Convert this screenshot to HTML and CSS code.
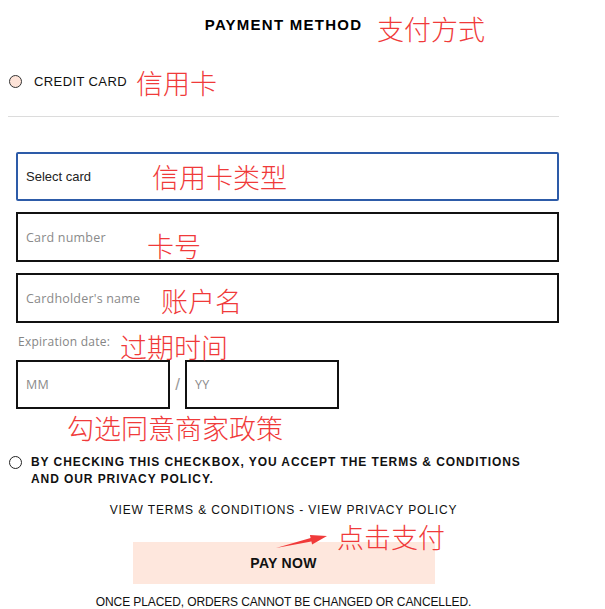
FILE: index.html
```html
<!DOCTYPE html>
<html lang="en">
<head>
<meta charset="utf-8">
<title>Payment method</title>
<link rel="stylesheet" href="styles.css">
</head>
<body>
<div class="page">
  <h1 class="title">PAYMENT METHOD</h1>
  <div class="method">
    <span class="radio radio-filled"></span>
    <span class="method-label">CREDIT CARD</span>
  </div>
  <div class="divider"></div>
  <div class="fields">
    <div class="field field-select">Select card</div>
    <div class="field field-input field-gap">Card number</div>
    <div class="field field-input field-gap">Cardholder's name</div>
    <div class="exp-label">Expiration date:</div>
    <div class="exp-row">
      <div class="field field-input field-short">MM</div>
      <span class="slash">/</span>
      <div class="field field-input field-short">YY</div>
    </div>
  </div>
  <div class="agree">
    <span class="radio radio-empty"></span>
    <p class="agree-text">BY CHECKING THIS CHECKBOX, YOU ACCEPT THE TERMS &amp; CONDITIONS AND OUR PRIVACY POLICY.</p>
  </div>
  <div class="links">VIEW TERMS &amp; CONDITIONS - VIEW PRIVACY POLICY</div>
  <button class="pay" type="button">PAY NOW</button>
  <p class="final-note">ONCE PLACED, ORDERS CANNOT BE CHANGED OR CANCELLED.</p>

  <div class="notes">
    <span class="note note-method">支付方式</span>
    <span class="note note-credit">信用卡</span>
    <span class="note note-type">信用卡类型</span>
    <span class="note note-number">卡号</span>
    <span class="note note-name">账户名</span>
    <span class="note note-exp">过期时间</span>
    <span class="note note-agree">勾选同意商家政策</span>
    <span class="note note-pay">点击支付</span>
    <svg class="arrow" width="62" height="22" viewBox="0 0 62 22" aria-hidden="true">
      <polygon points="6,18 40.6,8 39.9,4.9 57,6 42.1,14.6 41.4,11.5" fill="#f03a3a"/>
    </svg>
  </div>
</div>
</body>
</html>
```

FILE: styles.css
```css
html, body {
  margin: 0;
  padding: 0;
  background: #ffffff;
  overflow: hidden;
}

body {
  font-family: "Liberation Sans", Arial, sans-serif;
  color: #111;
}

.page {
  position: relative;
  width: 551px;
  height: 609px;
  padding: 0 46px 0 8px;
}

.title {
  margin: 0;
  height: 48px;
  display: flex;
  align-items: center;
  justify-content: center;
  font-size: 15px;
  font-weight: bold;
  letter-spacing: 1.25px;
  color: #000;
}

.method {
  height: 66px;
  display: flex;
  align-items: center;
  gap: 12px;
  padding-left: 1px;
}

.radio {
  display: block;
  width: 13px;
  height: 13px;
  box-sizing: border-box;
  border-radius: 50%;
  flex: none;
}

.radio-filled {
  background: #fde3d8;
  border: 1px solid #333;
}

.radio-empty {
  background: #fff;
  border: 1.5px solid #222;
}

.method-label {
  font-size: 13px;
  letter-spacing: 0.4px;
  color: #111;
}

.divider {
  margin-top: 2px;
  height: 1px;
  background: #dcdcdc;
}

.fields {
  margin-left: 8px;
  margin-top: 35px;
}

.field {
  box-sizing: border-box;
  display: flex;
  align-items: center;
  padding-left: 8px;
  height: 50px;
}

.field-select {
  height: 49px;
  border: 2px solid #2d5ba8;
  border-radius: 2px;
  font-size: 13px;
  color: #222;
}

.field-input {
  border: 2px solid #111;
  font-family: "Open Sans", "Liberation Sans", sans-serif;
  font-size: 12.5px;
  letter-spacing: 0.2px;
  color: #8a8a8a;
}

.field-gap {
  margin-top: 11px;
}

.exp-label {
  margin-top: 11px;
  padding-left: 2px;
  height: 16px;
  line-height: 16px;
  font-family: "Open Sans", "Liberation Sans", sans-serif;
  font-size: 12px;
  letter-spacing: 0.25px;
  color: #858585;
}

.exp-row {
  margin-top: 10px;
  display: flex;
  align-items: center;
}

.field-short {
  width: 154px;
  height: 49px;
}

.slash {
  width: 15px;
  text-align: center;
  font-size: 17px;
  color: #9a9a9a;
}

.agree {
  margin-top: 45px;
  display: flex;
  align-items: flex-start;
  gap: 9px;
  padding-left: 1px;
}

.agree .radio {
  margin-top: 2px;
}

.agree-text {
  margin: 0;
  width: 496px;
  font-size: 12px;
  line-height: 17px;
  font-weight: bold;
  letter-spacing: 0.92px;
  color: #111;
}

.links {
  margin-top: 14px;
  height: 16px;
  line-height: 16px;
  text-align: center;
  font-size: 12px;
  letter-spacing: 0.85px;
  color: #111;
}

.pay {
  display: block;
  margin: 24px auto 0;
  width: 302px;
  height: 42px;
  border: none;
  background: #fee7dd;
  font-family: "Liberation Sans", Arial, sans-serif;
  font-size: 14px;
  font-weight: bold;
  letter-spacing: 0.3px;
  color: #111;
  padding: 0;
}

.final-note {
  margin: 11px 0 0;
  height: 14px;
  line-height: 14px;
  text-align: center;
  font-size: 12px;
  letter-spacing: -0.1px;
  color: #111;
}

.notes {
  position: absolute;
  inset: 0;
  pointer-events: none;
}

.note {
  position: absolute;
  font-family: "Noto Sans CJK SC", sans-serif;
  font-size: 27px;
  line-height: 27px;
  font-weight: 300;
  color: #f03a3a;
  white-space: nowrap;
}

.note-method { left: 377px; top: 15px; }
.note-credit { left: 136px; top: 69px; }
.note-type   { left: 152px; top: 163px; }
.note-number { left: 147px; top: 232px; }
.note-name   { left: 161px; top: 287px; }
.note-exp    { left: 120px; top: 333px; }
.note-agree  { left: 67px;  top: 414px; }
.note-pay    { left: 337px; top: 523px; }

.arrow {
  position: absolute;
  left: 270px;
  top: 530px;
}
```
